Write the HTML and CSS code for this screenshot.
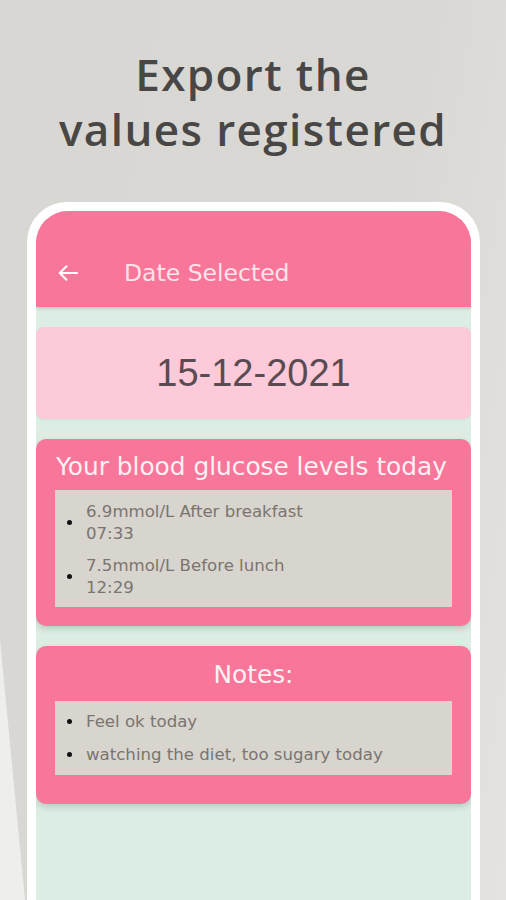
FILE: index.html
```html
<!DOCTYPE html>
<html lang="en">
<head>
<meta charset="utf-8">
<title>Export the values registered</title>
<link rel="stylesheet" href="styles.css">
</head>
<body>
<div class="page">
  <h1 class="headline">Export the<br>values registered</h1>
  <div class="phone">
    <div class="screen">
      <header class="appbar">
        <svg class="back" viewBox="0 0 20 16" width="20" height="16" aria-hidden="true">
          <path d="M19 8H1.8M8.5 1.2L1.7 8l6.8 6.8" fill="none" stroke="#fff" stroke-width="2" stroke-linecap="round" stroke-linejoin="round"/>
        </svg>
        <span class="appbar-title">Date Selected</span>
      </header>
      <main class="content">
        <div class="date-card">15-12-2021</div>
        <section class="card card-levels">
          <h2 class="card-title">Your blood glucose levels today</h2>
          <ul class="list">
            <li class="item"><span class="dot"></span><span class="item-text">6.9mmol/L After breakfast<br>07:33</span></li>
            <li class="item"><span class="dot"></span><span class="item-text">7.5mmol/L Before lunch<br>12:29</span></li>
          </ul>
        </section>
        <section class="card card-notes">
          <h2 class="card-title center">Notes:</h2>
          <ul class="list">
            <li class="item"><span class="dot"></span><span class="item-text">Feel ok today</span></li>
            <li class="item"><span class="dot"></span><span class="item-text">watching the diet, too sugary today</span></li>
          </ul>
        </section>
      </main>
    </div>
  </div>
</div>
</body>
</html>
```
FILE: styles.css
```css
* { box-sizing: border-box; }
html, body {
  margin: 0;
  padding: 0;
}
body {
  width: 506px;
  height: 900px;
  overflow: hidden;
  background: linear-gradient(100deg, #d9d7d3 0%, #dad8d4 65%, #e4e3e0 100%);
  position: relative;
}
body::before {
  content: "";
  position: absolute;
  left: 0;
  top: 0;
  width: 40px;
  height: 900px;
  background: #eeeeec;
  clip-path: polygon(0 640px, 25px 900px, 0 900px);
}
.page {
  position: relative;
  display: flex;
  flex-direction: column;
  align-items: center;
  height: 900px;
}
.headline {
  margin: 47px 0 0;
  font-family: "Open Sans", "Noto Sans", sans-serif;
  font-weight: 600;
  font-size: 44px;
  line-height: 55px;
  color: #484745;
  text-align: center;
  letter-spacing: 1.4px;
}
.phone {
  margin-top: 45px;
  align-self: flex-start;
  margin-left: 27px;
  width: 453px;
  flex: 1;
  border: 9px solid #ffffff;
  border-bottom: none;
  border-radius: 40px 40px 0 0;
  background: #ffffff;
}
.screen {
  height: 100%;
  background: #dcede3;
  border-radius: 32px 32px 0 0;
  overflow: hidden;
  font-family: "DejaVu Sans", sans-serif;
}
.appbar {
  height: 96px;
  background: #f8769a;
  display: flex;
  align-items: center;
  padding: 28px 0 0 22px;
  box-shadow: 0 2px 3px rgba(0,0,0,0.12);
}
.back { flex: none; }
.appbar-title {
  margin-left: 46px;
  color: #fde3ea;
  font-size: 23.5px;
}
.content {
  display: flex;
  flex-direction: column;
  gap: 20px;
  padding-top: 20px;
}
.date-card {
  height: 92px;
  background: #fccad9;
  border-radius: 8px;
  display: flex;
  align-items: center;
  justify-content: center;
  font-family: "Liberation Sans", sans-serif;
  font-size: 38px;
  color: #5a4b52;
  box-shadow: 0 1px 2px rgba(0,0,0,0.06);
}
.card {
  background: #f8769a;
  border-radius: 10px;
  padding: 0 19px 19px;
  box-shadow: 0 3px 6px rgba(0,0,0,0.15);
}
.card-notes { padding-bottom: 29px; }
.card-title {
  margin: 0;
  height: 51px;
  display: flex;
  align-items: center;
  padding: 4px 0 0 1px;
  font-weight: normal;
  font-size: 24.8px;
  color: #fdf0f3;
  white-space: nowrap;
}
.card-title.center { justify-content: center; padding-left: 0; height: 55px; padding-top: 2px; }
.list {
  list-style: none;
  margin: 0;
  padding: 11px 0 9px 12px;
  background: #d8d4ce;
  display: flex;
  flex-direction: column;
  gap: 11px;
}
.card-notes .list { padding: 10px 0 10px 12px; }
.item {
  display: flex;
  align-items: center;
}
.dot {
  width: 5px;
  height: 5px;
  border-radius: 50%;
  background: #111;
  flex: none;
}
.item-text {
  margin-left: 14px;
  font-size: 16.6px;
  line-height: 21.5px;
  color: #7a7570;
}
```
